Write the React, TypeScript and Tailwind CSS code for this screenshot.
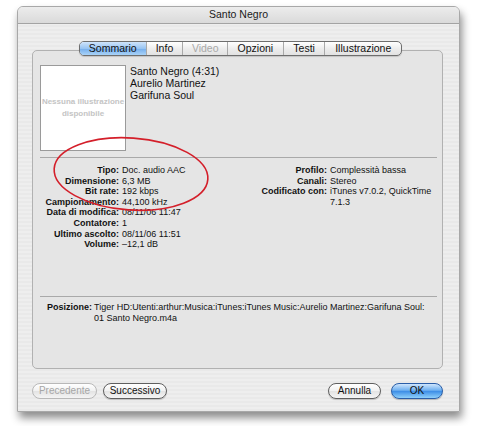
const font = "font-['Liberation_Sans',Arial,sans-serif]";

const tabs = [
  { label: 'Sommario', w: 'w-[66px]', active: true },
  { label: 'Info', w: 'w-[37px]' },
  { label: 'Video', w: 'w-[45px]', disabled: true },
  { label: 'Opzioni', w: 'w-[56px]' },
  { label: 'Testi', w: 'w-[42px]' },
  { label: 'Illustrazione', w: 'w-[77px]' },
];

const leftRows: [string, string][] = [
  ['Tipo:', 'Doc. audio AAC'],
  ['Dimensione:', '6,3 MB'],
  ['Bit rate:', '192 kbps'],
  ['Campionamento:', '44,100 kHz'],
  ['Data di modifica:', '08/11/06 11:47'],
  ['Contatore:', '1'],
  ['Ultimo ascolto:', '08/11/06 11:51'],
  ['Volume:', '\u201312,1 dB'],
];

const rightRows: [string, string][] = [
  ['Profilo:', 'Complessità bassa'],
  ['Canali:', 'Stereo'],
  ['Codificato con:', 'iTunes v7.0.2, QuickTime 7.1.3'],
];

function TabBar() {
  return (
    <div className="relative z-10 ml-[47px] flex h-[15px] w-[323px] overflow-hidden rounded-[5px] border border-[#6e6e6e] bg-[linear-gradient(#ffffff,#ececec_55%,#e2e2e2)] shadow-[0_1px_1px_rgba(0,0,0,0.15)]">
      {tabs.map((t, i) => (
        <div
          key={t.label}
          className={[
            'flex h-full items-center justify-center text-[10.5px] leading-none',
            t.w,
            i > 0 ? 'border-l border-[#a9a9a9]' : '',
            t.active
              ? 'bg-[linear-gradient(#cfe4fb,#98c4f2_50%,#74adec_51%,#a9d3f8)] text-[#111]'
              : '',
            t.disabled ? 'text-[#a9a9a9]' : 'text-[#111]',
          ].join(' ')}
        >
          {t.label}
        </div>
      ))}
    </div>
  );
}

function InfoGrid({ rows, labelW, valueW }: { rows: [string, string][]; labelW: string; valueW: string }) {
  return (
    <div className={`grid content-start self-start gap-x-[3px] text-[9px] leading-[10.6px] text-[#111] ${labelW}`}>
      {rows.map(([k, v]) => (
        <div key={k} className="contents">
          <div className="whitespace-nowrap text-right font-bold">{k}</div>
          <div className={valueW}>{v}</div>
        </div>
      ))}
    </div>
  );
}

function PillButton({ label, w, disabled }: { label: string; w: string; disabled?: boolean }) {
  return (
    <button
      className={`flex h-[16px] items-center justify-center rounded-full border bg-[linear-gradient(#ffffff,#f1f1f1_50%,#e3e3e3_51%,#f4f4f4)] text-[10px] leading-none ${w} ${
        disabled ? 'border-[#b8b8b8] text-[#a6a6a6]' : 'border-[#5f5f5f] text-[#111] shadow-[0_1px_1px_rgba(0,0,0,0.2)]'
      }`}
    >
      {label}
    </button>
  );
}

export default function App() {
  return (
    <div className={`relative h-[426px] w-[480px] overflow-hidden bg-white pl-[17px] pt-[6px] ${font}`}>
      <div className="flex h-[406px] w-[443px] flex-col overflow-hidden rounded-t-[6px] border border-[#a8a8a8] bg-[image:repeating-linear-gradient(180deg,#eeeeee_0px,#eeeeee_2px,#e9e9e9_2px,#e9e9e9_4px)] shadow-[2px_6px_9px_rgba(0,0,0,0.45)]">
        {/* title bar */}
        <div className="flex h-[17px] shrink-0 items-center justify-center border-b border-[#a3a3a3] bg-[linear-gradient(#ececec,#dadada)] text-[10.5px] text-[#1b1b1b]">
          Santo Negro
        </div>

        <div className="flex flex-1 flex-col pl-[14px] pt-[17px]">
          <TabBar />

          {/* group box */}
          <div className="-mt-[6px] flex h-[319px] w-[411px] flex-col rounded-[5px] border border-[#b1b1b1] bg-[#e5e5e5]">
            <div className="flex h-[106px] pl-[7px] pt-[14px]">
              <div className="flex h-[86px] w-[86px] flex-col items-center justify-center border border-[#9a9a9a] bg-white text-[8px] font-bold leading-[12px] text-[#c4c4c4]">
                <span className="whitespace-nowrap">Nessuna illustrazione</span>
                <span>disponibile</span>
              </div>
              <div className="ml-[4px] mt-[1px] text-[10.5px] leading-[11.8px] text-[#111]">
                <div>Santo Negro (4:31)</div>
                <div>Aurelio Martinez</div>
                <div>Garifuna Soul</div>
              </div>
            </div>

            <div className="ml-[7px] mr-[5px] h-px bg-[#a9a9a9]" />

            <div className="flex h-[138px] items-start pl-[8px] pt-[7px]">
              <div className="w-[206px]">
                <InfoGrid rows={leftRows} labelW="grid-cols-[78px_auto]" valueW="whitespace-nowrap" />
              </div>
              <InfoGrid rows={rightRows} labelW="grid-cols-[80px_110px]" valueW="" />
            </div>

            <div className="ml-[7px] mr-[5px] h-px bg-[#a9a9a9]" />

            <div className="flex pl-[14px] pt-[5px] text-[9px] leading-[11px] text-[#111]">
              <div className="w-[47px] font-bold">Posizione:</div>
              <div className="whitespace-nowrap">
                <div>Tiger HD:Utenti:arthur:Musica:iTunes:iTunes Music:Aurelio Martinez:Garifuna Soul:</div>
                <div>01 Santo Negro.m4a</div>
              </div>
            </div>
          </div>

          {/* bottom buttons */}
          <div className="mt-[14px] flex w-[411px] items-center">
            <PillButton label="Precedente" w="w-[65px]" disabled />
            <div className="ml-[6px]">
              <PillButton label="Successivo" w="w-[64px]" />
            </div>
            <div className="ml-auto">
              <PillButton label="Annulla" w="w-[53px]" />
            </div>
            <button className="ml-[10px] flex h-[16px] w-[52px] items-center justify-center rounded-full border border-[#2a5ea8] bg-[linear-gradient(#cfe6fd,#6fb0f0_45%,#3d8ee6_52%,#8fd0fb)] text-[10px] leading-none text-[#111] shadow-[0_1px_1px_rgba(0,0,0,0.25)]">
              OK
            </button>
          </div>
        </div>
      </div>

      {/* red annotation ring */}
      <svg className="pointer-events-none absolute left-0 top-0" width="480" height="426">
        <ellipse
          cx="131"
          cy="174"
          rx="77"
          ry="36"
          transform="rotate(4 131 174)"
          fill="none"
          stroke="#d41f2a"
          strokeWidth="1.6"
        />
      </svg>
    </div>
  );
}
